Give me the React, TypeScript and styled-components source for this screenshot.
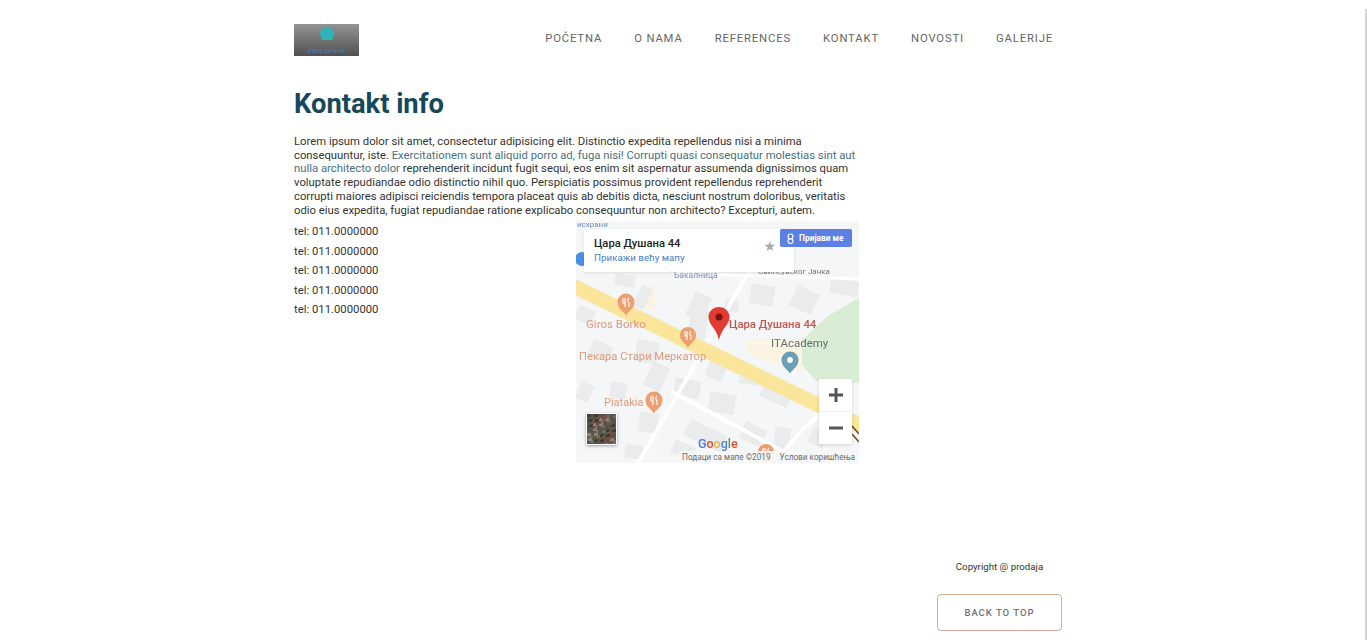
import React from "react";
import styled, { createGlobalStyle } from "styled-components";

const Global = createGlobalStyle`
  html, body { margin: 0; padding: 0; background: #fff; overflow: hidden; }
  body { font-family: Roboto, "Liberation Sans", sans-serif; color: #2b2b2b; }
`;

const Page = styled.div`
  position: relative;
  height: 640px;
  padding-left: 294px;
  box-sizing: border-box;
`;

const ScrollStrip = styled.div`
  position: absolute;
  right: 0;
  top: 9px;
  bottom: 0;
  width: 2px;
  background: #d4d4d4;
`;

const Column = styled.div`
  width: 768px;
`;

const Header = styled.header`
  display: flex;
  align-items: flex-start;
  justify-content: space-between;
  padding: 24px 9px 0 0;
  height: 66px;
`;

const Logo = styled.div`
  width: 65px;
  height: 32px;
  line-height: 0;
  background: linear-gradient(180deg, #949494 0%, #505050 100%);
`;

const Nav = styled.nav`
  display: flex;
  gap: 32px;
  padding-top: 8px;
`;

const NavLink = styled.a`
  font-size: 11.3px;
  line-height: 14px;
  letter-spacing: 0.84px;
  color: #666;
  white-space: nowrap;
`;

const Title = styled.h1`
  margin: 0 0 17px;
  font-size: 27.3px;
  line-height: 28px;
  font-weight: 700;
  color: #16485c;
`;

const Paragraph = styled.p`
  margin: 0;
  width: 564px;
  font-size: 11.3px;
  line-height: 13.7px;
  color: #333;
`;

const Accent = styled.span`
  color: #47707f;
`;

const ContactRow = styled.div`
  display: flex;
  align-items: flex-start;
  margin-top: 4px;
`;

const Phones = styled.ul`
  list-style: none;
  margin: 0;
  padding: 1px 0 0;
  width: 282px;
`;

const Phone = styled.li`
  font-size: 11.3px;
  line-height: 19.5px;
  color: #333;
`;

const MapFrame = styled.div`
  position: relative;
  width: 283px;
  height: 242px;
  overflow: hidden;
  background: #f5f6f7;
`;

const MapCard = styled.div`
  position: absolute;
  left: 8px;
  top: 8px;
  width: 210px;
  height: 43px;
  background: #fff;
  box-shadow: 0 1px 3px rgba(0, 0, 0, 0.1);
  padding: 8px 10px;
  box-sizing: border-box;
`;

const CardTitle = styled.div`
  font-size: 11.2px;
  line-height: 14px;
  font-weight: 500;
  color: #222;
`;

const CardLink = styled.div`
  font-size: 9.8px;
  line-height: 14px;
  color: #4a7fc9;
`;

const Star = styled.span`
  position: absolute;
  right: 18px;
  top: 8px;
  font-size: 14px;
  line-height: 18px;
  color: #aaa;
  font-family: "DejaVu Sans", sans-serif;
`;

const SignIn = styled.div`
  position: absolute;
  left: 204px;
  top: 8px;
  width: 72px;
  height: 18px;
  box-sizing: border-box;
  padding-left: 6px;
  display: flex;
  align-items: center;
  gap: 4px;
  background: #5b7fe3;
  border-radius: 2px;
  color: #fff;
  font-size: 8.4px;
  font-weight: 700;
  white-space: nowrap;
`;

const Zoom = styled.div`
  position: absolute;
  left: 243px;
  top: 158px;
  width: 33px;
  height: 65px;
  background: #fff;
  box-shadow: 0 1px 3px rgba(0, 0, 0, 0.15);
  display: flex;
  flex-direction: column;
`;

const ZoomBtn = styled.div`
  flex: 1;
  display: flex;
  align-items: center;
  justify-content: center;
  & + & { border-top: 1px solid #eee; }
`;

const Thumb = styled.div`
  position: absolute;
  left: 10px;
  top: 192px;
  width: 31px;
  height: 32px;
  border: 1px solid #fff;
  box-sizing: border-box;
  box-shadow: 0 1px 3px rgba(0, 0, 0, 0.35);
  overflow: hidden;
  line-height: 0;
`;

const Attribution = styled.div`
  position: absolute;
  right: 0;
  bottom: 0;
  padding: 1px 4px 1px 3px;
  display: flex;
  gap: 9px;
  font-size: 8.2px;
  line-height: 10px;
  color: #6b6b6b;
  white-space: nowrap;
  background: rgba(245, 246, 247, 0.92);
`;

const Footer = styled.footer`
  display: flex;
  flex-direction: column;
  align-items: center;
  width: 125px;
  margin: 97px 0 0 auto;
`;

const Copyright = styled.div`
  font-size: 9.7px;
  line-height: 14px;
  color: #333;
  white-space: nowrap;
`;

const BackToTop = styled.a`
  margin-top: 20px;
  width: 125px;
  height: 37px;
  box-sizing: border-box;
  display: flex;
  align-items: center;
  justify-content: center;
  border: 1px solid #d9a89a;
  border-radius: 4px;
  font-size: 9.5px;
  letter-spacing: 1px;
  color: #6f7478;
  font-weight: 500;
`;

const links = ["POČETNA", "O NAMA", "REFERENCES", "KONTAKT", "NOVOSTI", "GALERIJE"];
const buildings: [number, number, number, number][] = [
  [176, 62, 24, 20], [222, 64, 24, 22], [256, 56, 28, 16], [120, 70, 18, 26], [150, 78, 14, 12],
  [4, 84, 18, 14], [40, 52, 20, 12], [66, 64, 12, 22], [62, 118, 22, 22], [18, 118, 22, 16],
  [116, 86, 18, 30], [6, 160, 14, 18], [36, 160, 16, 16], [78, 140, 18, 26], [100, 156, 26, 18],
  [140, 128, 18, 28], [165, 148, 22, 14], [190, 160, 30, 16], [135, 170, 26, 20], [115, 198, 40, 18],
  [65, 190, 18, 20], [170, 200, 24, 18], [50, 222, 18, 14], [100, 218, 22, 14], [200, 205, 16, 24],
  [238, 206, 16, 16],
];

function Pin({ x, y, r = 9, fill = "#ee9f70", fork = true }: { x: number; y: number; r?: number; fill?: string; fork?: boolean }) {
  return (
    <g transform={`translate(${x} ${y})`}>
      <path d={`M0 ${r * 1.6} C${-r * 0.25} ${r * 1.1} ${-r} ${r * 0.8} ${-r} 0 A${r} ${r} 0 1 1 ${r} 0 C${r} ${r * 0.8} ${r * 0.25} ${r * 1.1} 0 ${r * 1.6} Z`} fill={fill} />
      {fork ? (
        <path d={`M-3 -4 V1 H-1 V5 M-1 -4 V1 M3 -4 C1.500 -3 1.500 0 3 1 V5`} stroke="#fff" strokeWidth="1.100" fill="none" />
      ) : (
        <circle r={r * 0.34} fill="#fff" />
      )}
    </g>
  );
}

function MapDrawing() {
  return (
    <svg width="283" height="242" viewBox="0 0 283 242" style={{ position: "absolute", left: 0, top: 0, filter: "blur(0.35px)" }}>
      <rect width="283" height="242" fill="#f5f6f7" />
      <polygon points="283,77 252,95 214,130 240,160 283,162" fill="#d9ecd4" />
      <polygon points="172,118 226,118 226,152 172,132" fill="#fcf4e3" />
      <rect x="66" y="66" width="12" height="20" fill="#fdf3d8" />
      {buildings.map(([x, y, w, h], i) => (
        <rect key={i} x={x} y={y} width={w} height={h} fill="#e9ebed" transform={`rotate(${i % 2 ? 25 : 10} ${x} ${y})`} />
      ))}
      <g stroke="#fff" strokeWidth="4" fill="none">
        <path d="M62 242 L165 64 L178 44" />
        <path d="M95 170 L210 232" />
        <path d="M200 242 Q225 205 250 190" />
        <path d="M100 52 L283 58" strokeWidth="3" />
      </g>
      <path d="M-5 64 L300 212" stroke="#f6e7ab" strokeWidth="15" fill="none" />
      <path d="M-5 64 L300 212" stroke="#fbe59a" strokeWidth="12" fill="none" />
      <path d="M276 205 l7 8 M276 213 l7 8" stroke="#6a5a28" strokeWidth="1.800" fill="none" />
      <text x="1" y="6" fontSize="8" fill="#6f8fc4" fontFamily="Roboto">исхрани</text>
      <text x="98" y="57" fontSize="8.500" fill="#7f95b5" fontFamily="Roboto">Бакалница</text>
      <text x="182" y="53" fontSize="8" fill="#777" fontFamily="Roboto">Свилеувског Јанка</text>
      <circle cx="6" cy="38" r="7" fill="#4a90e2" />
      <Pin x={50} y={81} r={8.500} />
      <text x="10" y="107" fontSize="11.500" fill="#dd9a7c" fontFamily="Roboto">Giros Borko</text>
      <Pin x={112} y={114} r={8} />
      <text x="3" y="139" fontSize="11.200" fill="#dd9a7c" fontFamily="Roboto">Пекара Стари Меркатор</text>
      <text x="195" y="126" fontSize="11.500" fill="#5f6e76" fontFamily="Roboto">ITAcademy</text>
      <Pin x={214} y={139} r={8.500} fill="#6a9fb5" fork={false} />
      <text x="28" y="185" fontSize="11" fill="#dd9a7c" fontFamily="Roboto">Piatakia</text>
      <Pin x={78} y={179} r={8.500} />
      <Pin x={190} y={231} r={8} />
      <text x="122" y="227" fontSize="12.500" fontWeight="500" fontFamily="Roboto">
        <tspan fill="#4a7de0">G</tspan><tspan fill="#e0503f">o</tspan><tspan fill="#f0b840">o</tspan>
        <tspan fill="#4a7de0">g</tspan><tspan fill="#3fa85a">l</tspan><tspan fill="#e0503f">e</tspan>
      </text>
      <path d="M143 86 c-6 0 -10.500 4.500 -10.500 10 c0 8 8 11 10.500 23 c2.500 -12 10.500 -15 10.500 -23 c0 -5.500 -4.500 -10 -10.500 -10 Z" fill="#e23c32" />
      <circle cx="143" cy="96" r="3.500" fill="#7a1410" />
      <text x="153" y="107" fontSize="11.300" fontWeight="500" fill="#c8564c" fontFamily="Roboto">Цара Душана 44</text>
    </svg>
  );
}

const thumbPatches = Array.from({ length: 60 }, (_, i) => ({
  x: (i * 7) % 29,
  y: (i * 11) % 30,
  c: ["#3f3a34", "#6e6a5e", "#7a4f42", "#4f5a48", "#8a8578"][i % 5],
}));

export default function App() {
  return (
    <Page>
      <Global />
      <ScrollStrip />
      <Column>
        <Header>
          <Logo>
            <svg width="65" height="32" viewBox="0 0 65 32">
              <polygon points="33,2 40.500,7.500 38,16 28,16 25.500,7.500" fill="#2fb3b8" />
              <text x="32.500" y="29" textAnchor="middle" fontSize="6.500" fontWeight="700" fill="#4f78ad" letterSpacing="0.3" fontFamily="Liberation Serif">PHILIENSE</text>
            </svg>
          </Logo>
          <Nav>
            {links.map((l) => (
              <NavLink key={l}>{l}</NavLink>
            ))}
          </Nav>
        </Header>
        <Title>Kontakt info</Title>
        <Paragraph>
          Lorem ipsum dolor sit amet, consectetur adipisicing elit. Distinctio expedita repellendus nisi a minima
          consequuntur, iste. <Accent>Exercitationem sunt aliquid porro ad, fuga nisi! Corrupti quasi consequatur molestias sint aut
          nulla architecto dolor</Accent> reprehenderit incidunt fugit sequi, eos enim sit aspernatur assumenda dignissimos quam
          voluptate repudiandae odio distinctio nihil quo. Perspiciatis possimus provident repellendus reprehenderit
          corrupti maiores adipisci reiciendis tempora placeat quis ab debitis dicta, nesciunt nostrum doloribus, veritatis
          odio eius expedita, fugiat repudiandae ratione explicabo consequuntur non architecto? Excepturi, autem.
        </Paragraph>
        <ContactRow>
          <Phones>
            {[0, 1, 2, 3, 4].map((i) => (
              <Phone key={i}>tel: 011.0000000</Phone>
            ))}
          </Phones>
          <MapFrame>
            <MapDrawing />
            <MapCard>
              <CardTitle>Цара Душана 44</CardTitle>
              <CardLink>Прикажи већу мапу</CardLink>
              <Star>★</Star>
            </MapCard>
            <SignIn>
              <svg width="9" height="11" viewBox="0 0 9 11">
                <circle cx="4.500" cy="3.500" r="2.500" fill="none" stroke="#fff" strokeWidth="1.200" />
                <circle cx="4.500" cy="8" r="2.500" fill="none" stroke="#fff" strokeWidth="1.200" />
              </svg>
              Пријави ме
            </SignIn>
            <Zoom>
              <ZoomBtn>
                <svg width="16" height="16" viewBox="0 0 16 16">
                  <path d="M8 1v14M1 8h14" stroke="#555" strokeWidth="3" />
                </svg>
              </ZoomBtn>
              <ZoomBtn>
                <svg width="16" height="16" viewBox="0 0 16 16">
                  <path d="M1 8h14" stroke="#555" strokeWidth="3" />
                </svg>
              </ZoomBtn>
            </Zoom>
            <Thumb>
              <svg width="29" height="30" viewBox="0 0 29 30">
                <rect width="29" height="30" fill="#5b5148" />
                {thumbPatches.map((p, i) => (
                  <rect key={i} x={p.x} y={p.y} width="4" height="3" fill={p.c} />
                ))}
              </svg>
            </Thumb>
            <Attribution>
              <span>Подаци са мапе ©2019</span>
              <span>Услови коришћења</span>
            </Attribution>
          </MapFrame>
        </ContactRow>
        <Footer>
          <Copyright>Copyright @ prodaja</Copyright>
          <BackToTop>BACK TO TOP</BackToTop>
        </Footer>
      </Column>
    </Page>
  );
}
